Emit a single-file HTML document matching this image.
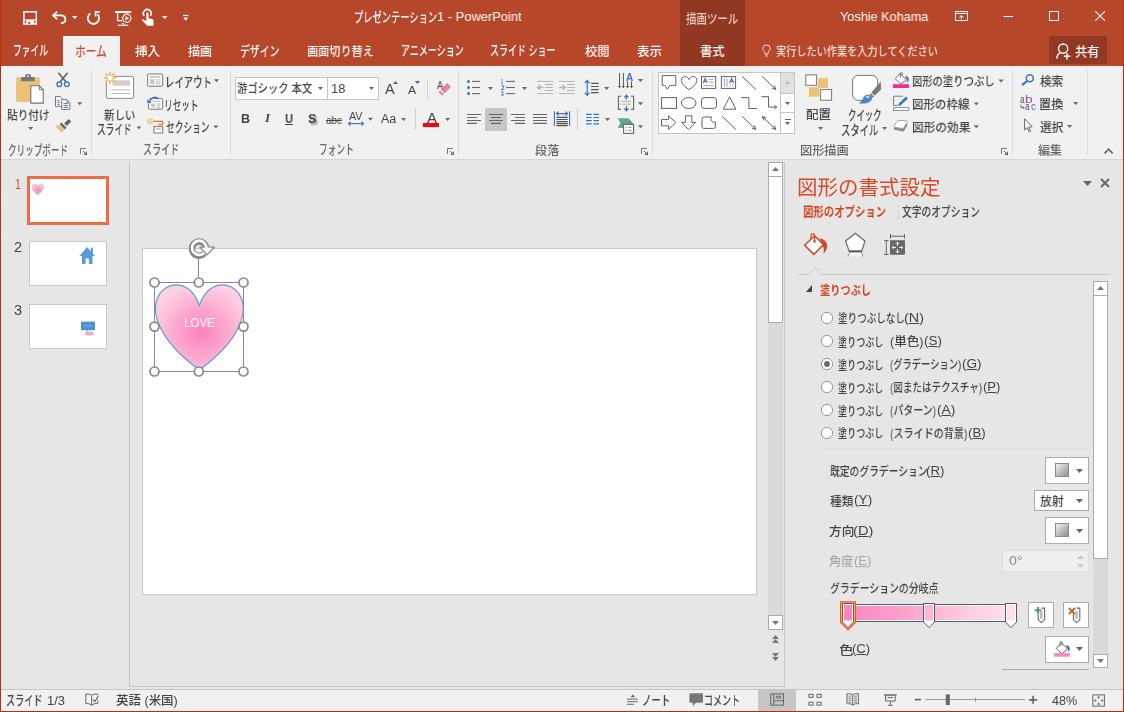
<!DOCTYPE html>
<html lang="ja"><head><meta charset="utf-8"><title>PowerPoint</title><style>
html,body{margin:0;padding:0;}
body{width:1124px;height:712px;position:relative;overflow:hidden;background:#E6E6E6;font-family:"Liberation Sans","Noto Sans CJK JP",sans-serif;color:#444;}
.a{position:absolute;}
.t{position:absolute;white-space:nowrap;line-height:20px;transform-origin:0 0;color:#444;font-weight:500;will-change:transform;}
svg{position:absolute;overflow:visible;}
u{text-decoration:underline;text-underline-offset:1px;}
</style></head>
<body>
<div class="a" style="left:0px;top:0px;width:1124px;height:66px;background:#B7472A;"></div>
<div class="a" style="left:680px;top:0px;width:65px;height:66px;background:#913823;"></div>
<div class="a" style="left:0px;top:66px;width:1124px;height:94px;background:#F1F1F1;border-bottom:1px solid #D4D4D4;box-sizing:border-box;"></div>
<div class="a" style="left:63px;top:36px;width:57px;height:31px;background:#F1F1F1;"></div>
<div class="a" style="left:1049px;top:36px;width:58px;height:28px;background:#923924;"></div>
<div class="a" style="left:91px;top:70px;width:1px;height:85px;background:#DADADA;"></div>
<div class="a" style="left:230px;top:70px;width:1px;height:85px;background:#DADADA;"></div>
<div class="a" style="left:458px;top:70px;width:1px;height:85px;background:#DADADA;"></div>
<div class="a" style="left:652px;top:70px;width:1px;height:85px;background:#DADADA;"></div>
<div class="a" style="left:1012px;top:70px;width:1px;height:85px;background:#DADADA;"></div>
<div class="a" style="left:1087px;top:70px;width:1px;height:85px;background:#DADADA;"></div>
<div class="a" style="left:427px;top:79px;width:1px;height:20px;background:#D0D0D0;"></div>
<div class="a" style="left:415px;top:108px;width:1px;height:22px;background:#D0D0D0;"></div>
<div class="a" style="left:577px;top:108px;width:1px;height:22px;background:#D0D0D0;"></div>
<div class="a" style="left:235px;top:77px;width:93px;height:23px;background:#fff;box-sizing:border-box;border:1px solid #C6C6C6;"></div>
<div class="a" style="left:327px;top:77px;width:52px;height:23px;background:#fff;box-sizing:border-box;border:1px solid #C6C6C6;"></div>
<svg style="left:318px;top:87px" width="5" height="3" viewBox="0 0 5 3"><path d="M0 0H5L2.5 3Z" fill="#666"/></svg>
<svg style="left:369px;top:87px" width="5" height="3" viewBox="0 0 5 3"><path d="M0 0H5L2.5 3Z" fill="#666"/></svg>
<div class="a" style="left:485px;top:108px;width:22px;height:23px;background:#C6C6C6;"></div>
<div class="a" style="left:658px;top:72px;width:137px;height:62px;background:#fff;box-sizing:border-box;border:1px solid #C6C6C6;"></div>
<div class="a" style="left:781px;top:73px;width:13px;height:20px;background:#E1E1E1;"></div>
<div class="a" style="left:781px;top:93px;width:13px;height:1px;background:#C6C6C6;"></div>
<div class="a" style="left:781px;top:112px;width:13px;height:1px;background:#C6C6C6;"></div>
<div class="a" style="left:780px;top:73px;width:1px;height:60px;background:#C6C6C6;"></div>
<svg style="left:785px;top:81px" width="5" height="3" viewBox="0 0 5 3"><path d="M0 3H5L2.5 0Z" fill="#B8B8B8"/></svg>
<svg style="left:785px;top:102px" width="5" height="3" viewBox="0 0 5 3"><path d="M0 0H5L2.5 3Z" fill="#666"/></svg>
<div class="a" style="left:784.5px;top:119px;width:6.0px;height:1px;background:#666;"></div>
<svg style="left:785px;top:122px" width="5" height="3" viewBox="0 0 5 3"><path d="M0 0H5L2.5 3Z" fill="#666"/></svg>
<div class="a" style="left:129px;top:162px;width:1px;height:524px;background:#C6C6C6;"></div>
<div class="a" style="left:129px;top:686px;width:656px;height:1px;background:#C6C6C6;"></div>
<div class="a" style="left:27px;top:176px;width:82px;height:49px;background:#fff;box-sizing:border-box;border:3px solid #ED6C47;"></div>
<div class="a" style="left:29px;top:241px;width:78px;height:45px;background:#fff;box-sizing:border-box;border:1px solid #C8C8C8;"></div>
<div class="a" style="left:29px;top:304px;width:78px;height:45px;background:#fff;box-sizing:border-box;border:1px solid #C8C8C8;"></div>
<div class="a" style="left:142px;top:248px;width:615px;height:347px;background:#fff;box-sizing:border-box;border:1px solid #C8C8C8;"></div>
<div class="a" style="left:768px;top:162px;width:15px;height:468px;background:#DADADA;"></div>
<div class="a" style="left:768px;top:162px;width:15px;height:15px;background:#fff;box-sizing:border-box;border:1px solid #ABABAB;"></div>
<div class="a" style="left:768px;top:176px;width:15px;height:147px;background:#fff;box-sizing:border-box;border:1px solid #ABABAB;"></div>
<div class="a" style="left:768px;top:615px;width:15px;height:15px;background:#fff;box-sizing:border-box;border:1px solid #ABABAB;"></div>
<svg style="left:772px;top:167px" width="7" height="4" viewBox="0 0 7 4"><path d="M0 4H7L3.5 0Z" fill="#777"/></svg>
<svg style="left:772px;top:621px" width="7" height="4" viewBox="0 0 7 4"><path d="M0 0H7L3.5 4Z" fill="#777"/></svg>
<svg style="left:772px;top:635px" width="7" height="8" viewBox="0 0 7 8"><path d="M0 4H7L3.5 0Z M0 8H7L3.5 4Z" fill="#777"/></svg>
<svg style="left:772px;top:653px" width="7" height="8" viewBox="0 0 7 8"><path d="M0 0H7L3.5 4Z M0 4H7L3.5 8Z" fill="#777"/></svg>
<div class="a" style="left:784px;top:162px;width:1px;height:525px;background:#C6C6C6;"></div>
<svg style="left:798px;top:267px" width="312" height="9" viewBox="0 0 312 9"><path d="M0 7.5H10.9L17 0.2L23.2 7.5H311.5" fill="none" stroke="#C8C8C8" stroke-width="1"/></svg>
<svg style="left:1083px;top:181px" width="9" height="5" viewBox="0 0 9 5"><path d="M0 0H9L4.5 5Z" fill="#666"/></svg>
<svg style="left:1100px;top:178px" width="10" height="10" viewBox="0 0 10 10"><path d="M1 1L9 9M9 1L1 9" stroke="#666" stroke-width="2" fill="none"/></svg>
<div class="a" style="left:898px;top:204px;width:1px;height:15px;background:#D8D8D8;"></div>
<div class="a" style="left:1093px;top:281px;width:15px;height:387px;background:#DADADA;"></div>
<div class="a" style="left:1093px;top:281px;width:15px;height:15px;background:#fff;box-sizing:border-box;border:1px solid #ABABAB;"></div>
<div class="a" style="left:1093px;top:295px;width:15px;height:264px;background:#fff;box-sizing:border-box;border:1px solid #ABABAB;"></div>
<div class="a" style="left:1093px;top:654px;width:15px;height:14px;background:#fff;box-sizing:border-box;border:1px solid #ABABAB;"></div>
<svg style="left:1097px;top:286px" width="7" height="4" viewBox="0 0 7 4"><path d="M0 4H7L3.5 0Z" fill="#777"/></svg>
<svg style="left:1097px;top:659px" width="7" height="4" viewBox="0 0 7 4"><path d="M0 0H7L3.5 4Z" fill="#777"/></svg>
<svg style="left:806.3px;top:284.6px" width="6" height="7" viewBox="0 0 6 7"><path d="M6 0V7H0Z" fill="#444"/></svg>
<svg style="left:820.1px;top:310.9px" width="14" height="14" viewBox="0 0 14 14"><circle cx="7" cy="7" r="5.6" fill="#fff" stroke="#9A9A9A" stroke-width="1"/></svg>
<svg style="left:820.1px;top:333.9px" width="14" height="14" viewBox="0 0 14 14"><circle cx="7" cy="7" r="5.6" fill="#fff" stroke="#9A9A9A" stroke-width="1"/></svg>
<svg style="left:820.1px;top:356.9px" width="14" height="14" viewBox="0 0 14 14"><circle cx="7" cy="7" r="5.6" fill="#fff" stroke="#9A9A9A" stroke-width="1"/><circle cx="7" cy="7" r="2.9" fill="#6A6A6A"/></svg>
<svg style="left:820.1px;top:379.9px" width="14" height="14" viewBox="0 0 14 14"><circle cx="7" cy="7" r="5.6" fill="#fff" stroke="#9A9A9A" stroke-width="1"/></svg>
<svg style="left:820.1px;top:402.9px" width="14" height="14" viewBox="0 0 14 14"><circle cx="7" cy="7" r="5.6" fill="#fff" stroke="#9A9A9A" stroke-width="1"/></svg>
<svg style="left:820.1px;top:425.9px" width="14" height="14" viewBox="0 0 14 14"><circle cx="7" cy="7" r="5.6" fill="#fff" stroke="#9A9A9A" stroke-width="1"/></svg>
<div class="a" style="left:820px;top:449px;width:269px;height:1px;background:#DEDEDE;"></div>
<div class="a" style="left:1045px;top:457px;width:44px;height:27px;background:#fff;box-sizing:border-box;border:1px solid #ABABAB;"></div>
<div class="a" style="left:1034px;top:490px;width:55px;height:21px;background:#fff;box-sizing:border-box;border:1px solid #ABABAB;"></div>
<div class="a" style="left:1045px;top:517px;width:44px;height:27px;background:#fff;box-sizing:border-box;border:1px solid #ABABAB;"></div>
<div class="a" style="left:1002px;top:550px;width:87px;height:22px;background:#EFEFEF;box-sizing:border-box;border:1px solid #E0E0E0;"></div>
<svg style="left:1054px;top:462px" width="16" height="16" viewBox="0 0 16 16"><defs><linearGradient id="g470" x1="0" y1="0" x2="1" y2="1"><stop offset="0" stop-color="#f4f4f4"/><stop offset="1" stop-color="#8c8c8c"/></linearGradient></defs><rect x="1.5" y="1.5" width="13" height="13" fill="url(#g470)" stroke="#8A8A8A"/></svg>
<svg style="left:1076.2px;top:469px" width="7" height="4" viewBox="0 0 7 4"><path d="M0 0H7L3.5 4Z" fill="#666"/></svg>
<svg style="left:1054px;top:522px" width="16" height="16" viewBox="0 0 16 16"><defs><linearGradient id="g530" x1="0" y1="0" x2="1" y2="1"><stop offset="0" stop-color="#f4f4f4"/><stop offset="1" stop-color="#8c8c8c"/></linearGradient></defs><rect x="1.5" y="1.5" width="13" height="13" fill="url(#g530)" stroke="#8A8A8A"/></svg>
<svg style="left:1076.2px;top:529px" width="7" height="4" viewBox="0 0 7 4"><path d="M0 0H7L3.5 4Z" fill="#666"/></svg>
<svg style="left:1076.2px;top:498.5px" width="7" height="4" viewBox="0 0 7 4"><path d="M0 0H7L3.5 4Z" fill="#666"/></svg>
<svg style="left:1077px;top:555px" width="7" height="4" viewBox="0 0 7 4"><path d="M0 4H7L3.5 0Z" fill="#C8C8C8"/></svg>
<svg style="left:1077px;top:563.8px" width="7" height="4" viewBox="0 0 7 4"><path d="M0 0H7L3.5 4Z" fill="#C8C8C8"/></svg>
<div class="a" style="left:842px;top:604px;width:175px;height:18px;background:#fff;box-sizing:border-box;border:1px solid #5A5A5A;"></div>
<div class="a" style="left:844px;top:606px;width:171px;height:14px;background:linear-gradient(90deg,#FB86BC 0%,#FC9CC8 30%,#FDB4D3 50%,#FECFE2 75%,#FEE3EE 100%);"></div>
<svg style="left:839px;top:599px" width="18" height="34" viewBox="0 0 18 34"><path d="M1.6 2.9H16.4V23.4L9 30.6L1.6 23.4Z" fill="#FFD966" stroke="#F0501E" stroke-width="1.2"/><path d="M3.5 4.5H14.5V23L9 28.6L3.5 23Z" fill="#fff" stroke="#5A5A5A" stroke-width="1"/><rect x="5" y="6" width="8" height="15.5" fill="#FB86BC"/></svg>
<svg style="left:920px;top:599px" width="18" height="34" viewBox="0 0 18 34"><path d="M3.5 4.5H14.5V23L9 28.6L3.5 23Z" fill="#fff" stroke="#5A5A5A" stroke-width="1"/><rect x="5" y="6" width="8" height="15.5" fill="#FDB6D5"/></svg>
<svg style="left:1002px;top:599px" width="18" height="34" viewBox="0 0 18 34"><path d="M3.5 4.5H14.5V23L9 28.6L3.5 23Z" fill="#fff" stroke="#5A5A5A" stroke-width="1"/><rect x="5" y="6" width="8" height="15.5" fill="#FEE0EC"/></svg>
<div class="a" style="left:1028px;top:602px;width:26px;height:26px;background:#fff;box-sizing:border-box;border:1px solid #ABABAB;"></div>
<div class="a" style="left:1063px;top:602px;width:26px;height:26px;background:#fff;box-sizing:border-box;border:1px solid #ABABAB;"></div>
<div class="a" style="left:1045px;top:636px;width:44px;height:27px;background:#fff;box-sizing:border-box;border:1px solid #ABABAB;"></div>
<svg style="left:1076.2px;top:647.2px" width="7" height="4" viewBox="0 0 7 4"><path d="M0 0H7L3.5 4Z" fill="#666"/></svg>
<div class="a" style="left:1002px;top:669px;width:87px;height:1px;background:#ABABAB;"></div>
<div class="a" style="left:0px;top:689px;width:1124px;height:23px;background:#F1F1F1;border-top:1px solid #C6C6C6;box-sizing:border-box;"></div>
<div class="a" style="left:758px;top:690px;width:38px;height:21px;background:#C6C6C6;"></div>
<svg style="left:0;top:0" width="1124" height="712" viewBox="0 0 1124 712">
<rect x="23.9" y="11.8" width="12.4" height="12.2" fill="none" stroke="#fff" stroke-width="1.5" />
<path d="M24 19.9H36" fill="none" stroke="#fff" stroke-width="1.1" />
<path d="M26.2 20.2H34.2V24H26.2Z" fill="#fff" />
<rect x="28.3" y="21.8" width="1.9" height="2.2" fill="#B7472A" />
<path d="M57.2 11.6L53 15.4L57.2 19.2" fill="none" stroke="#fff" stroke-width="1.8" stroke-linejoin="miter"/>
<path d="M53.5 15.4H60.6C63.4 15.4 65.4 17 65.4 19.4C65.4 21.8 63.4 23 60.8 23.1" fill="none" stroke="#fff" stroke-width="1.8" />
<path d="M72 16h5.4l-2.7 3Z" fill="#fff" />
<path d="M90.3 13.6A5.6 5.6 0 1 0 97.6 14.4" fill="none" stroke="#fff" stroke-width="1.8" />
<path d="M95.6 16.6V11.9H99.8" fill="none" stroke="#fff" stroke-width="1.7" />
<rect x="115" y="11.1" width="16.2" height="1.9" fill="#fff" />
<path d="M117.6 13V20.6H122" fill="none" stroke="#fff" stroke-width="1.3" />
<circle cx="126.8" cy="18.2" r="4.1" fill="none" stroke="#fff" stroke-width="1.2"/>
<path d="M125.5 16L129 18.2L125.5 20.4Z" fill="#fff" />
<path d="M122.3 22.8L124 24.8" fill="none" stroke="#fff" stroke-width="1.1" />
<path d="M117.9 25.3H128.3" fill="none" stroke="#fff" stroke-width="1.2" />
<path d="M144.2 15.8A3.9 3.9 0 1 1 150.4 15.8" fill="none" stroke="#fff" stroke-width="1.6" />
<path d="M146.3 13.6a1.1 1.1 0 0 1 2.2 0V18.2l3.6 0.9c1 0.3 1.4 0.9 1.4 1.9V25.8H147.2L142.2 20.6c-0.5-0.6 0.3-1.6 1.2-1.1L146.3 21.2Z" fill="#fff" />
<path d="M162 16h5.4l-2.7 3Z" fill="#fff" />
<rect x="183.1" y="14.9" width="5.2" height="1.1" fill="#fff" />
<path d="M183.1 17.6h5.2l-2.6 3.2Z" fill="#fff" />
<rect x="955.5" y="11.5" width="12" height="9" fill="none" stroke="#fff" stroke-width="1" />
<path d="M955.5 13.5H967.5" fill="none" stroke="#fff" stroke-width="1" />
<path d="M961.4 19.3V15.6M959.4 17.4L961.4 15.4L963.4 17.4" fill="none" stroke="#fff" stroke-width="1" />
<path d="M1003.5 16.5H1013" fill="none" stroke="#fff" stroke-width="1" />
<rect x="1049.5" y="11.5" width="9" height="9" fill="none" stroke="#fff" stroke-width="1" />
<path d="M1095.3 11.2L1105 20.9M1105 11.2L1095.3 20.9" fill="none" stroke="#fff" stroke-width="1.1" />
<path d="M765 54.2V52.3C763.6 51.3 762.8 50 762.8 48.6A3.7 3.7 0 0 1 770.2 48.6C770.2 50 769.4 51.3 768 52.3V54.2Z" fill="none" stroke="#F6DDD5" stroke-width="1" />
<path d="M765.2 56H767.8" fill="none" stroke="#F6DDD5" stroke-width="1" />
<circle cx="1063.1" cy="48.6" r="4.6" fill="none" stroke="#fff" stroke-width="1.4"/>
<path d="M1056.8 58.6C1057 55.4 1058.6 53.4 1060.6 52.6" fill="none" stroke="#fff" stroke-width="1.4" />
<path d="M1067 53V59.4M1063.8 56.2H1070.2" fill="none" stroke="#fff" stroke-width="1.4" />
<rect x="16.1" y="77.2" width="23.8" height="24.8" fill="#EBC378" rx="1.6"/>
<path d="M21.1 81.2V78.2Q21.1 77 22.3 77H25.3V75.6Q25.3 74.1 26.8 74.1H29.4Q30.9 74.1 30.9 75.6V77H33.6Q34.8 77 34.8 78.2V81.2Z" fill="#777" />
<rect x="27.2" y="75.3" width="1.8" height="1.4" fill="#F1F1F1" />
<path d="M30.8 85.8H39.3L43.3 89.8V103.1H30.8Z" fill="#fff" stroke="#777" stroke-width="1.1" />
<path d="M39.3 85.8V89.8H43.3" fill="none" stroke="#777" stroke-width="1" />
<path d="M28 127.1h5.2l-2.6 3Z" fill="#6A6A6A" />
<path d="M58.4 72.8L66.2 82.2M67.6 72.8L59.8 82.2" fill="none" stroke="#666" stroke-width="1.7" />
<circle cx="59.3" cy="84.2" r="2.4" fill="none" stroke="#3A74B8" stroke-width="1.3"/>
<circle cx="66.8" cy="84.2" r="2.4" fill="none" stroke="#3A74B8" stroke-width="1.3"/>
<path d="M55.5 96.6H60.3L62.8 99.1V106.4H55.5Z" fill="#fff" stroke="#777" stroke-width="1" />
<path d="M57.2 100.5H59.8M57.2 102.5H59.8M57.2 104.4H59.8" fill="none" stroke="#3A74B8" stroke-width="0.9" />
<path d="M61.7 99.6H66.8L69.8 102.6V109.4H61.7Z" fill="#fff" stroke="#777" stroke-width="1" />
<path d="M66.8 99.6V102.6H69.8" fill="none" stroke="#777" stroke-width="0.8" />
<path d="M63.4 103.6H68M63.4 105.5H68M63.4 107.4H68" fill="none" stroke="#3A74B8" stroke-width="0.9" />
<path d="M77.3 102.2h5l-2.5 3Z" fill="#6A6A6A" />
<path d="M68.6 119L71.3 121.6L66.8 126L64.2 123.2Z" fill="#666" />
<path d="M61.2 122.2L66.6 127.8L64.4 129.4L59.8 124.2Z" fill="#666" />
<path d="M59.4 124.6L64 129.8L61.6 132.8L55.2 126.2Z" fill="#EBC378" />
<rect x="106.4" y="76.4" width="27.2" height="22" fill="#fff" stroke="#8A8A8A" stroke-width="1" rx="1.6"/>
<rect x="112.5" y="80.3" width="17.5" height="5.4" fill="#CFCFCF" />
<path d="M112 89.9H130M112 93.4H130" fill="none" stroke="#B8B8B8" stroke-width="1" />
<path d="M109.6 89.9H110.8M109.6 93.4H110.8" fill="none" stroke="#B8B8B8" stroke-width="1" />
<circle cx="110" cy="77.8" r="4.4" fill="#F1F1F1"/>
<path d="M112.52 77.80L116.30 77.80M111.78 79.58L114.45 82.25M110.00 80.32L110.00 84.10M108.22 79.58L105.55 82.25M107.48 77.80L103.70 77.80M108.22 76.02L105.55 73.35M110.00 75.28L110.00 71.50M111.78 76.02L114.45 73.35" fill="none" stroke="#EBC06D" stroke-width="1.9" />
<circle cx="110" cy="77.8" r="2.1" fill="#fff"/>
<path d="M136.6 126.6h4.6l-2.3 2.9Z" fill="#6A6A6A" />
<rect x="147.7" y="74" width="15" height="12.2" fill="#fff" stroke="#777" stroke-width="1" rx="0.8"/>
<rect x="150" y="76" width="10.4" height="1.8" fill="#C8C8C8" />
<rect x="150" y="79.2" width="4.6" height="5" fill="#C8C8C8" />
<path d="M156 79.8H160.6M156 81.8H160.6M156 83.8H160.6" fill="none" stroke="#B0B0B0" stroke-width="0.9" />
<path d="M214 79.2h5l-2.5 3Z" fill="#6A6A6A" />
<rect x="148.5" y="98.6" width="14.2" height="10.6" fill="#fff" stroke="#777" stroke-width="1" rx="0.8"/>
<rect x="151" y="100.6" width="9.6" height="1.6" fill="#C8C8C8" />
<rect x="151" y="103.4" width="4.2" height="4" fill="#C8C8C8" />
<path d="M156.6 104H160.6M156.6 105.8H160.6M156.6 107.6H160.6" fill="none" stroke="#B0B0B0" stroke-width="0.9" />
<path d="M147.2 97.2V102.6H152.4" fill="none" stroke="#F1F1F1" stroke-width="3" />
<path d="M149.6 101.8C150.4 98.8 153.2 97 156 97.6C157 97.8 157.8 98.4 158.2 99" fill="none" stroke="#3A74B8" stroke-width="1.5" />
<path d="M147 99.6L147.6 103.4L151.6 102.6Z" fill="#3A74B8" />
<path d="M151.32 121.40L153.70 121.40M151.02 122.12L152.70 123.80M150.30 122.42L150.30 124.80M149.58 122.12L147.90 123.80M149.28 121.40L146.90 121.40M149.58 120.68L147.90 119.00M150.30 120.38L150.30 118.00M151.02 120.68L152.70 119.00" fill="none" stroke="#EBC06D" stroke-width="1.2" />
<path d="M153.6 121.4H162.6V124.6H158" fill="none" stroke="#E8772E" stroke-width="1.3" />
<rect x="153.9" y="126.6" width="8.8" height="6.4" fill="#fff" stroke="#777" stroke-width="1" />
<rect x="155.6" y="128.2" width="5.4" height="1.6" fill="#C8C8C8" />
<path d="M213.4 125.4h5l-2.5 3Z" fill="#6A6A6A" />
<path d="M80.5 153.9V148.5H85.9" fill="none" stroke="#777" stroke-width="1" /><path d="M87.0 151.2V154.9H83.3Z" fill="#666" /><path d="M83.0 151.0L85.7 153.7" fill="none" stroke="#666" stroke-width="1" />
<path d="M447.5 153.9V148.5H452.9" fill="none" stroke="#777" stroke-width="1" /><path d="M454.0 151.2V154.9H450.3Z" fill="#666" /><path d="M450.0 151.0L452.7 153.7" fill="none" stroke="#666" stroke-width="1" />
<path d="M641.5 153.9V148.5H646.9" fill="none" stroke="#777" stroke-width="1" /><path d="M648.0 151.2V154.9H644.3Z" fill="#666" /><path d="M644.0 151.0L646.7 153.7" fill="none" stroke="#666" stroke-width="1" />
<path d="M1001.5 153.9V148.5H1006.9" fill="none" stroke="#777" stroke-width="1" /><path d="M1008.0 151.2V154.9H1004.3Z" fill="#666" /><path d="M1004.0 151.0L1006.7 153.7" fill="none" stroke="#666" stroke-width="1" />
<path d="M392.9 84h5.2l-2.6 -3Z" fill="#3A74B8" />
<path d="M414.8 81h5.4l-2.7 3Z" fill="#3A74B8" />
<path d="M447.2 83L451 86.8L444.6 93.4L440.8 89.6Z" fill="#E8849A" />
<path d="M440 90.4L443.8 94.2L442.2 95.8L438.4 92Z" fill="#E8849A" />
<path d="M349 123.6H363" fill="none" stroke="#3A74B8" stroke-width="1.1" />
<path d="M350.6 121.6L348.4 123.6L350.6 125.6M361.4 121.6L363.6 123.6L361.4 125.6" fill="none" stroke="#3A74B8" stroke-width="1.1" />
<path d="M367.9 117.8h5l-2.5 3Z" fill="#6A6A6A" />
<path d="M401.1 118h5l-2.5 3Z" fill="#6A6A6A" />
<rect x="423" y="123" width="16" height="4" fill="#FF0000" />
<path d="M445 118h5.2l-2.6 3Z" fill="#6A6A6A" />
<circle cx="468.5" cy="81.4" r="1.5" fill="#3A74B8"/>
<path d="M472 81.4H480" fill="none" stroke="#666" stroke-width="1.1" />
<path d="M506.1 81.4H515" fill="none" stroke="#666" stroke-width="1.1" />
<circle cx="468.5" cy="87.5" r="1.5" fill="#3A74B8"/>
<path d="M472 87.5H480" fill="none" stroke="#666" stroke-width="1.1" />
<path d="M506.1 87.5H515" fill="none" stroke="#666" stroke-width="1.1" />
<circle cx="468.5" cy="93.6" r="1.5" fill="#3A74B8"/>
<path d="M472 93.6H480" fill="none" stroke="#666" stroke-width="1.1" />
<path d="M506.1 93.6H515" fill="none" stroke="#666" stroke-width="1.1" />
<path d="M487.9 87h5.2l-2.6 3Z" fill="#6A6A6A" />
<path d="M521.9 87h5.2l-2.6 3Z" fill="#6A6A6A" />
<path d="M537 81.4H553M537 93.6H553M545 84.5H553M545 87.5H553M545 90.5H553" fill="none" stroke="#B4B4B4" stroke-width="1" />
<path d="M543.5 87.5H538M540.4 85L537.6 87.5L540.4 90" fill="none" stroke="#B4B4B4" stroke-width="1.4" />
<path d="M559 81.4H575M559 93.6H575M567.2 84.5H575M567.2 87.5H575M567.2 90.5H575" fill="none" stroke="#B4B4B4" stroke-width="1" />
<path d="M559.2 87.5H564.8M562.6 85L565.4 87.5L562.6 90" fill="none" stroke="#B4B4B4" stroke-width="1.4" />
<path d="M587.2 80.6V95.2M584.8 83.2L587.2 80.4L589.6 83.2M584.8 92.6L587.2 95.4L589.6 92.6" fill="none" stroke="#3A74B8" stroke-width="1.2" />
<path d="M591.1 83.4H598.7M591.1 86.5H598.7M591.1 89.6H598.7M591.1 92.6H598.7" fill="none" stroke="#555" stroke-width="1.1" />
<path d="M604 87h5.2l-2.6 3Z" fill="#6A6A6A" />
<path d="M619.5 73V87.4M623.4 73V87.4M627.6 81.5V87.4M631.5 81.5V87.4" fill="none" stroke="#555" stroke-width="1" />
<path d="M617.9 86L619.5 88.2L621.1 86Z" fill="#555" />
<path d="M621.8 86L623.4 88.2L625.0 86Z" fill="#555" />
<path d="M626.0 86L627.6 88.2L629.2 86Z" fill="#555" />
<path d="M629.9 86L631.5 88.2L633.1 86Z" fill="#555" />
<path d="M637.9 79h5.2l-2.6 3Z" fill="#6A6A6A" />
<path d="M621 96.2H618.4V109.4H621M631 96.2H633.6V109.4H631" fill="none" stroke="#666" stroke-width="1.1" />
<path d="M622 101.3H631M622 104.2H631" fill="none" stroke="#B0B0B0" stroke-width="1" />
<path d="M620.4 101.3H621.2M620.4 104.2H621.2" fill="none" stroke="#888" stroke-width="1" />
<path d="M626.4 95.4V99.6M624.2 97.6L626.4 95.2L628.6 97.6M626.4 106V110.4M624.2 108.4L626.4 110.8L628.6 108.4" fill="none" stroke="#3A74B8" stroke-width="1.2" />
<path d="M637.9 102.3h5.2l-2.6 3Z" fill="#6A6A6A" />
<path d="M617.8 118.2H628.4L633 123V124H623V128H617.8L620.4 123Z" fill="#5FA88C" />
<rect x="623.6" y="124.4" width="10" height="9" fill="#fff" stroke="#666" stroke-width="1.1" />
<path d="M626 127.4H627M628.4 127.4H631.4M626 130.4H627M628.4 130.4H631.4" fill="none" stroke="#888" stroke-width="1" />
<path d="M637.9 125.2h5.2l-2.6 3Z" fill="#6A6A6A" />
<path d="M467 114.5H481M467 117.5H476.9M467 120.5H481M467 123.4H476.9" fill="none" stroke="#666" stroke-width="1.1" />
<path d="M489 114.5H502.9M491 117.5H500.9M489 120.5H502.9M491 123.4H500.9" fill="none" stroke="#666" stroke-width="1.1" />
<path d="M511 114.5H525M515 117.5H525M511 120.5H525M515 123.4H525" fill="none" stroke="#666" stroke-width="1.1" />
<path d="M533 114.5H547M533 117.5H547M533 120.5H547M533 123.4H547" fill="none" stroke="#666" stroke-width="1.1" />
<path d="M554.4 111.2V126M569.6 111.2V126" fill="none" stroke="#3A74B8" stroke-width="1.1" />
<path d="M556.6 113.6H567.4M558.6 111.6L556.4 113.6L558.6 115.6M565.4 111.6L567.6 113.6L565.4 115.6" fill="none" stroke="#3A74B8" stroke-width="1.2" />
<path d="M556.4 117.4H567.8M556.4 119.5H567.8M556.4 121.6H567.8M556.4 123.6H567.8M556.4 125.6H567.8" fill="none" stroke="#555" stroke-width="1.1" />
<path d="M586.1 114.3H591.7M593.5 114.3H599M586.1 117.5H591.7M593.5 117.5H599M586.1 120.6H591.7M593.5 120.6H599M586.1 123.8H591.7M593.5 123.8H599" fill="none" stroke="#3A74B8" stroke-width="1.2" />
<path d="M604.9 118h5.2l-2.6 3Z" fill="#6A6A6A" />
<path d="M662.2 75.6H675.8V85.4H670L667.4 89.2L664.8 85.4H662.2Z" fill="#fff" stroke="#626262" stroke-width="1" />
<path d="M689.1 79.7C692.3083333333334 72.0 704.8208333333333 79.7 689.1 89.60000000000001C673.3791666666667 79.7 685.8916666666667 72.0 689.1 79.7Z" fill="#fff" stroke="#626262" stroke-width="1" />
<rect x="701.5" y="76.6" width="14.2" height="11.8" fill="#fff" stroke="#626262" stroke-width="1" />
<path d="M703.2 83L705.2 78.4L707.2 83M703.9 81.4H706.5" fill="none" stroke="#3A74B8" stroke-width="1.1" />
<path d="M708.8 79.4H713.6M708.8 82H713.6M703.4 85.6H713.6" fill="none" stroke="#999" stroke-width="0.9" />
<rect x="721.4" y="76.6" width="14.2" height="11.8" fill="#fff" stroke="#626262" stroke-width="1" />
<path d="M729.6 83L731.6 78.4L733.6 83M730.3 81.4H732.9" fill="none" stroke="#3A74B8" stroke-width="1.1" />
<path d="M724.4 78.4V86.8M727 78.4V86.8" fill="none" stroke="#999" stroke-width="0.9" />
<path d="M730.4 84.4V86.8M732.8 84.4V86.8" fill="none" stroke="#999" stroke-width="0.9" stroke-dasharray="1 0.8"/>
<path d="M742.2 76.4L756 89.6" fill="none" stroke="#626262" stroke-width="1" />
<path d="M762.2 76.4L775.8 89.4" fill="none" stroke="#626262" stroke-width="1" />
<path d="M771.78 88.19L775.8 89.4L774.41 85.44" fill="none" stroke="#626262" stroke-width="1" />
<rect x="661.5" y="97.6" width="15" height="10.8" fill="#fff" stroke="#626262" stroke-width="1" />
<ellipse cx="688.7" cy="103" rx="7.3" ry="5.5" fill="#fff" stroke="#626262" stroke-width="1"/>
<rect x="701.5" y="97.6" width="15" height="10.8" fill="#fff" stroke="#626262" stroke-width="1" rx="2.6"/>
<path d="M729.6 96.8L735.8 109.2H723.4Z" fill="#fff" stroke="#626262" stroke-width="1" />
<path d="M741.2 97.6H748.9V108.5H756.9" fill="none" stroke="#626262" stroke-width="1" />
<path d="M761.4 96.7H768.5V107.1H776.6" fill="none" stroke="#626262" stroke-width="1" />
<path d="M774.34 108.82L776.8 107.1L774.34 105.38" fill="none" stroke="#626262" stroke-width="1" />
<path d="M661.5 119.4H668.6V115.8L675.8 122.6L668.6 129.4V125.8H661.5Z" fill="#fff" stroke="#626262" stroke-width="1" />
<path d="M685.4 115.8H691.8V122.4H695.6L688.6 129.6L681.6 122.4H685.4Z" fill="#fff" stroke="#626262" stroke-width="1" />
<path d="M704.4 117H711.4C709.8 120 711.6 122.6 715.4 122V126.6Q715.4 128.4 713.6 128.4H703.8Q702 128.4 702 126.6V119.4Q702 117 704.4 117Z" fill="#fff" stroke="#626262" stroke-width="1" />
<path d="M722.2 116.4L736 129.6" fill="none" stroke="#626262" stroke-width="1" />
<path d="M742.2 116.4L755.8 129.4" fill="none" stroke="#626262" stroke-width="1" />
<path d="M751.78 128.19L755.8 129.4L754.41 125.44" fill="none" stroke="#626262" stroke-width="1" />
<path d="M762.4 116.6L775.8 129.4" fill="none" stroke="#626262" stroke-width="1" />
<path d="M771.78 128.19L775.8 129.4L774.41 125.44" fill="none" stroke="#626262" stroke-width="1" />
<path d="M766.42 117.81L762.4 116.6L763.79 120.56" fill="none" stroke="#626262" stroke-width="1" />
<rect x="818" y="78.1" width="9.9" height="9.8" fill="#EBC378" />
<rect x="809" y="87.2" width="10.4" height="9.6" fill="#EBC378" />
<rect x="805.8" y="74.9" width="10.8" height="10.4" fill="#fff" stroke="#777" stroke-width="1" />
<rect x="820.6" y="89.6" width="11" height="10.6" fill="#fff" stroke="#777" stroke-width="1" />
<path d="M818 127.1h5.2l-2.6 3Z" fill="#6A6A6A" />
<rect x="852.6" y="75.4" width="25" height="25" fill="#fff" stroke="#777" stroke-width="1" rx="5.5"/>
<path d="M866 104L880 90V100Z" fill="#F1F1F1" />
<path d="M880.8 81.6L881 89.4L874.6 95.8L871.4 92.6Z" fill="#777" />
<path d="M870.8 93.2L874 96.4L872.6 97.8L869.4 94.6Z" fill="#777" />
<path d="M869 95C866.6 94.4 864.6 95.6 863.4 97.6C862.2 99.8 861.4 101.8 858.8 103.4C863.6 103.8 868.6 103.6 871 100.8C872.4 99 872.2 97 872 96.8Z" fill="#4A86C6" />
<path d="M866.2 96.6C867.6 95.8 869.4 96.4 869.8 97.6C868.6 97.4 867.4 97.4 866.2 98Z" fill="#fff" />
<path d="M882.1 127.1h5l-2.5 3Z" fill="#6A6A6A" />
<path d="M900.2 73.6L906.6 80L900.6 84L895.2 78.6Z" fill="#fff" stroke="#666" stroke-width="1" />
<path d="M900.4 78V73.4Q900.4 72.4 901.4 72.4Q902.4 72.4 902.4 73.4V75" fill="none" stroke="#666" stroke-width="0.9" />
<path d="M905.6 75.8C908 76.4 909.4 78.4 908.6 80.8L907 83C907.6 80.6 907.2 78.6 905.6 77.4Z" fill="#3A74B8" />
<rect x="893" y="84.2" width="16" height="3.8" fill="#F72B8C" />
<path d="M903 96.2H893.6V105.4H897.6" fill="none" stroke="#777" stroke-width="1" />
<path d="M906 96.4L908 98.4L900.6 105.2L898 106L898.8 103.4Z" fill="#3A74B8" />
<rect x="893.5" y="107.6" width="15.2" height="2.8" fill="#fff" stroke="#888" stroke-width="0.9" />
<path d="M897.6 122.8L894 128Q893.2 129.4 894.8 129.8L902.4 131.4Q903.6 131.6 904.4 130.4L907.2 125.6L907.2 123.4Z" fill="#8A8A8A" />
<path d="M899.2 120.6H905.8Q907.8 120.6 907 122.4L904.2 127.2Q903.4 128.6 901.6 128.4L895 127.4Q893.4 127 894.2 125.6L896.8 121.8Q897.6 120.6 899.2 120.6Z" fill="#fff" stroke="#999" stroke-width="0.9" />
<path d="M998.4 79.4h5.2l-2.6 3Z" fill="#6A6A6A" />
<path d="M973.7 102.4h5.2l-2.6 3Z" fill="#6A6A6A" />
<path d="M973.7 125.3h5.2l-2.6 3Z" fill="#6A6A6A" />
<circle cx="1029.8" cy="78.3" r="3.5" fill="none" stroke="#3A74B8" stroke-width="1.5"/>
<path d="M1027.2 81L1022 85.2" fill="none" stroke="#3A74B8" stroke-width="2.2" />
<path d="M1020.8 104.6V107.6H1024M1022.6 106L1024.2 107.6L1022.6 109.2" fill="none" stroke="#3A74B8" stroke-width="0.9" />
<path d="M1073.1 102h5.2l-2.6 3Z" fill="#6A6A6A" />
<path d="M1024.6 118.8V130L1027.2 127.6L1029 131.8L1030.6 131.2L1028.8 127L1032.2 126.8Z" fill="#fff" stroke="#555" stroke-width="0.9" />
<path d="M1067 125h5.2l-2.6 3Z" fill="#6A6A6A" />
<path d="M1104.6 153.4L1108.6 149.2L1112.6 153.4" fill="none" stroke="#666" stroke-width="1.7" />
<defs><radialGradient id="hg" cx="0.52" cy="0.56" r="0.58"><stop offset="0" stop-color="#FB82BA"/><stop offset="0.5" stop-color="#FCA8CD"/><stop offset="1" stop-color="#FFD1E3"/></radialGradient></defs>
<path d="M37.90 186.60C40.28 180.07 49.54 186.60 37.90 195.00C26.26 186.60 35.53 180.07 37.90 186.60Z" fill="url(#hg)" stroke="#9DB7E0" stroke-width="0.6" />
<path d="M79.4 256L87.2 247.1L90.8 251.2V247.8H92.9V253.6L95 256Z" fill="#5B9BD5" />
<path d="M82 255.4H92.5V264H88.9V258.6H85.6V264H82Z" fill="#5B9BD5" />
<rect x="81" y="321.6" width="14" height="8.6" fill="#4F8FD3" />
<path d="M84 325.6H92" fill="none" stroke="#9CC2EA" stroke-width="0.8" stroke-dasharray="1.2 0.6"/>
<path d="M86 330.2H88.4L87.2 331.8Z" fill="#4F8FD3" />
<ellipse cx="89.4" cy="333.5" rx="4.6" ry="2" fill="#F4A6CC"/>
<path d="M199.35 305.35C217.45 255.07 288.06 305.35 199.35 370.00C110.64 305.35 181.25 255.07 199.35 305.35Z" fill="url(#hg)" stroke="#6395D8" stroke-width="1.15" />
<rect x="154.5" y="282.5" width="89" height="89" fill="none" stroke="#8A8A8A" stroke-width="1" />
<circle cx="154.5" cy="282.5" r="4.5" fill="#fff" stroke="#888" stroke-width="1.7"/>
<circle cx="154.5" cy="326.6" r="4.5" fill="#fff" stroke="#888" stroke-width="1.7"/>
<circle cx="154.5" cy="371.5" r="4.5" fill="#fff" stroke="#888" stroke-width="1.7"/>
<circle cx="198.8" cy="282.5" r="4.5" fill="#fff" stroke="#888" stroke-width="1.7"/>
<circle cx="198.8" cy="371.5" r="4.5" fill="#fff" stroke="#888" stroke-width="1.7"/>
<circle cx="243.5" cy="282.5" r="4.5" fill="#fff" stroke="#888" stroke-width="1.7"/>
<circle cx="243.5" cy="326.6" r="4.5" fill="#fff" stroke="#888" stroke-width="1.7"/>
<circle cx="243.5" cy="371.5" r="4.5" fill="#fff" stroke="#888" stroke-width="1.7"/>
<path d="M198.5 259V278" fill="none" stroke="#8A8A8A" stroke-width="1" />
<path d="M204.2 253.6A7.1 7.1 0 1 1 206.2 248.6" fill="none" stroke="#858585" stroke-width="6.4" />
<path d="M200 247.2H214.2L207.1 254.9Z" fill="#fff" stroke="#8A8A8A" stroke-width="1.3" stroke-linejoin="round"/>
<path d="M203.8 253.2A7.1 7.1 0 1 1 206.2 248.6" fill="none" stroke="#fff" stroke-width="2.7" />
<path d="M204.6 248.4H210.4" fill="none" stroke="#fff" stroke-width="1.4" />
<path d="M819.8 238.2C824 239 827.6 242 827.2 246.4C827 249 825.4 251.6 823.4 253.8C824.4 250.4 823.8 247.4 822.4 245.8Z" fill="#D24726" />
<path d="M814.6 235.8L823.6 244.6L813.8 254.4L804.6 245.2Z" fill="#fff" stroke="#D24726" stroke-width="1.5" />
<path d="M811 239V235.6A1.8 1.8 0 0 1 814.6 235.6V241" fill="none" stroke="#D24726" stroke-width="1.3" />
<circle cx="814.5" cy="241.5" r="1.3" fill="#D24726"/>
<defs><linearGradient id="rf" x1="0" y1="0" x2="0" y2="1"><stop offset="0" stop-color="#fff"/><stop offset="1" stop-color="#fff" stop-opacity="0"/></linearGradient></defs>
<path d="M849.6 252.6H861.4L863.2 257H847.8Z" fill="url(#rf)" />
<path d="M849.6 252.6L847.8 256.6M861.4 252.6L863.2 256.6" fill="none" stroke="#999" stroke-width="1" />
<path d="M855.3 233.2L865 241L861.6 251.4H849.2L845.6 241Z" fill="#fff" stroke="#666" stroke-width="1.2" />
<path d="M849.2 251.4H861.6" fill="none" stroke="#555" stroke-width="2" />
<rect x="890" y="240.2" width="15" height="14.6" fill="#666" rx="0.8"/>
<path d="M890.5 236.2H904.5M890.5 234V238.6M904.5 234V238.6" fill="none" stroke="#666" stroke-width="1" />
<path d="M886.3 240.6V254.4M884 240.6H888.6M884 254.4H888.6" fill="none" stroke="#666" stroke-width="1" />
<path d="M897.5 242.4V252.6M892.4 247.5H902.6" fill="none" stroke="#fff" stroke-width="0.9" stroke-dasharray="3.6 3"/>
<path d="M896 243.8L897.5 242L899 243.8M896 251.2L897.5 253L899 251.2M893.8 246L892 247.5L893.8 249M901.2 246L903 247.5L901.2 249" fill="none" stroke="#fff" stroke-width="0.9" />
<path d="M1041.4 608.1H1044.6000000000001V619.6L1041.4 622.6L1038.2 619.6V612.4" fill="none" stroke="#666" stroke-width="1.1" /><rect x="1040.2" y="611.2" width="2.3" height="7.6" fill="#B4B4B4" />
<path d="M1038 607V613.4M1034.8 610.2H1041.2" fill="none" stroke="#4A9B7A" stroke-width="2" />
<path d="M1076.6000000000001 608.1H1079.8000000000002V619.6L1076.6000000000001 622.6L1073.4 619.6V612.4" fill="none" stroke="#666" stroke-width="1.1" /><rect x="1075.4" y="611.2" width="2.3" height="7.6" fill="#B4B4B4" />
<path d="M1068.8 608L1075 614.2M1075 608L1068.8 614.2" fill="none" stroke="#D8532E" stroke-width="1.8" />
<path d="M1061.3 643L1067.6 648.8L1062 653.6L1056.2 648.6Z" fill="#fff" stroke="#666" stroke-width="1" />
<path d="M1060 646.4V642.6Q1060 641.5 1061.1 641.5Q1062.2 641.5 1062.2 642.6V645.4" fill="none" stroke="#666" stroke-width="0.9" />
<path d="M1066.2 645C1069 645.4 1070.4 647.6 1069.6 650L1067.8 652.4C1068.4 650 1068 648.2 1066.6 646.8Z" fill="#3A74B8" />
<rect x="1054.1" y="653.1" width="15.7" height="3.6" fill="#FB86BC" />
<path d="M91.6 695.2V705.6M91.6 695.2C90 694.1 87.6 693.9 85.8 694.1V703.5C87.8 703.3 90 703.7 91.6 705.4C93.2 703.7 95.6 703.3 97.8 703.5V700.4" fill="none" stroke="#666" stroke-width="1" />
<path d="M91.6 695.2C93.2 694.1 95.4 693.9 97.8 694.1V695.4" fill="none" stroke="#666" stroke-width="1" />
<path d="M93 699.4L94.8 701.6L98.4 696.2" fill="none" stroke="#666" stroke-width="1.2" />
<path d="M630.7 697.1999999999999h4.4l-2.2 -2.8Z" fill="#666" />
<path d="M627.1 699.1H637.8M627.1 701.7H637.8M627.1 704.3H634" fill="none" stroke="#666" stroke-width="1" />
<path d="M690.6 693.2H701.8Q703 693.2 703 694.4V701.6Q703 702.8 701.8 702.8H696L692.8 706.2V702.8H690.6Q689.4 702.8 689.4 701.6V694.4Q689.4 693.2 690.6 693.2Z" fill="#777" />
<rect x="770.7" y="693.9" width="12.8" height="11.2" fill="none" stroke="#666" stroke-width="1" />
<path d="M773.8 694V705M773.8 700.8H783.4" fill="none" stroke="#666" stroke-width="1" />
<rect x="776.8" y="696.3" width="3.6" height="1.8" fill="none" stroke="#666" stroke-width="0.9" />
<rect x="808.9" y="694.3" width="4.2" height="3" fill="none" stroke="#666" stroke-width="1" />
<rect x="808.9" y="702.2" width="4.2" height="3" fill="none" stroke="#666" stroke-width="1" />
<rect x="817" y="694.3" width="4.2" height="3" fill="none" stroke="#666" stroke-width="1" />
<rect x="817" y="702.2" width="4.2" height="3" fill="none" stroke="#666" stroke-width="1" />
<path d="M852.7 694.8V705.6M852.7 694.8C851 693.6 848.8 693.6 847 693.8V703.8C849 703.6 851 703.8 852.7 705C854.4 703.8 856.4 703.6 858.4 703.8V693.8C856.6 693.6 854.4 693.6 852.7 694.8" fill="none" stroke="#666" stroke-width="1" />
<path d="M848.4 696.2H851.4M848.4 698.2H851.4M848.4 700.2H851.4M848.4 702.2H851.4M854 696.2H857M854 698.2H857M854 700.2H857M854 702.2H857" fill="none" stroke="#666" stroke-width="0.8" />
<path d="M884.1 695H896.6" fill="none" stroke="#666" stroke-width="1.5" />
<path d="M885.6 695.6V701H895.2V695.6M887.6 697.6H893.2M890.4 701V705.2M887.8 705.3H893" fill="none" stroke="#666" stroke-width="1" />
<path d="M914.9 699.6H920.9" fill="none" stroke="#666" stroke-width="1.7" />
<path d="M925.5 699.5H1025" fill="none" stroke="#9A9A9A" stroke-width="1" />
<path d="M975.5 697.4V702" fill="none" stroke="#9A9A9A" stroke-width="1" />
<rect x="945.8" y="694.4" width="4" height="10.6" fill="#666" />
<path d="M1029.1 699.8H1037.1M1033.1 695.8V703.8" fill="none" stroke="#666" stroke-width="1.7" />
<rect x="1092.8" y="694.9" width="11.6" height="11.2" fill="none" stroke="#666" stroke-width="1" />
<path d="M1098.6 696.4V698.8M1098.6 702.4V704.8M1094.2 700.5H1096.6M1100.6 700.5H1103" fill="none" stroke="#666" stroke-width="0.9" />
<path d="M1097.4 697.6L1098.6 696.2L1099.8 697.6M1097.4 703.6L1098.6 705L1099.8 703.6M1095.4 699.3L1094 700.5L1095.4 701.7M1101.8 699.3L1103.2 700.5L1101.8 701.7" fill="none" stroke="#666" stroke-width="0.8" />
</svg>
<div class="a" style="left:0px;top:0px;width:1124px;height:712px;box-sizing:border-box;border:1px solid #B5300F;border-top:none;"></div>
<span class="t" style="left:353.74px;top:7.90px;font-size:13.6px;color:#fff;transform:scaleX(0.6807);">プレゼンテーション</span>
<span class="t" style="left:436.81px;top:7.30px;font-size:13px;font-weight:400;color:#fff;transform:scaleX(0.9917);">1 - PowerPoint</span>
<span class="t" style="left:686.30px;top:8.50px;font-size:12.6px;color:#EBCBC0;transform:scaleX(0.8286);">描画ツール</span>
<span class="t" style="left:840.01px;top:6.90px;font-size:12.8px;font-weight:400;color:#fff;transform:scaleX(0.9909);">Yoshie Kohama</span>
<span class="t" style="left:12.71px;top:40.50px;font-size:13.6px;color:#fff;transform:scaleX(0.6442);">ファイル</span>
<span class="t" style="left:75.21px;top:41.50px;font-size:13.6px;color:#C9492B;transform:scaleX(0.7895);">ホーム</span>
<span class="t" style="left:135.00px;top:41.50px;font-size:12.5px;color:#fff;">挿入</span>
<span class="t" style="left:188.00px;top:41.50px;font-size:12.5px;color:#fff;transform:scaleX(0.9600);">描画</span>
<span class="t" style="left:239.77px;top:41.50px;font-size:13.6px;color:#fff;transform:scaleX(0.7264);">デザイン</span>
<span class="t" style="left:307.11px;top:41.50px;font-size:12.5px;color:#fff;transform:scaleX(0.8904);">画面切り替え</span>
<span class="t" style="left:400.67px;top:40.50px;font-size:13.6px;color:#fff;transform:scaleX(0.6630);">アニメーション</span>
<span class="t" style="left:490.18px;top:40.50px;font-size:13.6px;color:#fff;transform:scaleX(0.6615);">スライド ショー</span>
<span class="t" style="left:585.00px;top:41.50px;font-size:12.5px;color:#fff;transform:scaleX(0.9792);">校閲</span>
<span class="t" style="left:637.00px;top:41.50px;font-size:12.5px;color:#fff;">表示</span>
<span class="t" style="left:699.52px;top:41.50px;font-size:12.5px;color:#fff;transform:scaleX(0.9792);">書式</span>
<span class="t" style="left:776.19px;top:41.50px;font-size:12.5px;color:#F6DDD5;transform:scaleX(0.8122);">実行したい作業を入力してください</span>
<span class="t" style="left:1075.00px;top:41.50px;font-size:12.8px;color:#fff;transform:scaleX(0.9520);">共有</span>
<span class="t" style="left:6.62px;top:105.50px;font-size:12.2px;transform:scaleX(0.8766);">貼り付け</span>
<span class="t" style="left:8.06px;top:141.30px;font-size:13.4px;color:#666;transform:scaleX(0.6407);">クリップボード</span>
<span class="t" style="left:104.00px;top:105.50px;font-size:12.2px;transform:scaleX(0.8611);">新しい</span>
<span class="t" style="left:96.93px;top:120.00px;font-size:13.6px;transform:scaleX(0.6373);">スライド</span>
<span class="t" style="left:142.65px;top:140.30px;font-size:13.4px;color:#666;transform:scaleX(0.6740);">スライド</span>
<span class="t" style="left:164.50px;top:72.90px;font-size:13.4px;transform:scaleX(0.7000);">レイアウト</span>
<span class="t" style="left:164.47px;top:95.50px;font-size:13.4px;transform:scaleX(0.6429);">リセット</span>
<span class="t" style="left:165.95px;top:118.20px;font-size:13.4px;transform:scaleX(0.6508);">セクション</span>
<span class="t" style="left:237.35px;top:79.40px;font-size:12.2px;transform:scaleX(0.8483);">游ゴシック 本文</span>
<span class="t" style="left:330.73px;top:78.90px;font-size:12.2px;transform:scaleX(1.0667);">18</span>
<span class="t" style="left:319.20px;top:139.90px;font-size:13.4px;color:#666;transform:scaleX(0.6500);">フォント</span>
<span class="t" style="left:240.66px;top:108.80px;font-size:12px;font-weight:700;transform:scaleX(1.0429);">B</span>
<span class="t" style="left:264.50px;top:108.30px;font-size:12px;font-weight:700;font-style:italic;font-family:'Liberation Serif',serif;transform:scaleX(1.1000);">I</span>
<span class="t" style="left:285.40px;top:108.80px;font-size:12px;font-weight:700;transform:scaleX(0.9333);"><u>U</u></span>
<span class="t" style="left:308.00px;top:109.30px;font-size:13px;font-weight:700;text-shadow:1.5px 1.5px 1.5px #999;">S</span>
<span class="t" style="left:325.80px;top:109.50px;font-size:11px;transform:scaleX(0.9000);"><s>abc</s></span>
<span class="t" style="left:348.80px;top:106.00px;font-size:10.5px;transform:scaleX(1.0231);">AV</span>
<span class="t" style="left:381.20px;top:108.90px;font-size:12.5px;transform:scaleX(0.9800);">Aa</span>
<span class="t" style="left:426.70px;top:108.00px;font-size:14px;transform:scaleX(1.0667);">A</span>
<span class="t" style="left:385.40px;top:78.80px;font-size:14px;transform:scaleX(1.0333);">A</span>
<span class="t" style="left:408.10px;top:80.00px;font-size:11px;transform:scaleX(1.1143);">A</span>
<span class="t" style="left:534.90px;top:141.10px;font-size:12.2px;color:#666;">段落</span>
<span class="t" style="left:806.37px;top:105.30px;font-size:12.2px;transform:scaleX(1.0261);">配置</span>
<span class="t" style="left:848.37px;top:105.60px;font-size:13.4px;transform:scaleX(0.6255);">クイック</span>
<span class="t" style="left:840.91px;top:120.90px;font-size:13.4px;transform:scaleX(0.6961);">スタイル</span>
<span class="t" style="left:799.50px;top:141.10px;font-size:12.2px;color:#666;">図形描画</span>
<span class="t" style="left:911.95px;top:72.40px;font-size:12.2px;transform:scaleX(0.8458);">図形の塗りつぶし</span>
<span class="t" style="left:911.86px;top:95.40px;font-size:12.2px;transform:scaleX(0.9433);">図形の枠線</span>
<span class="t" style="left:911.84px;top:118.30px;font-size:12.2px;transform:scaleX(0.9593);">図形の効果</span>
<span class="t" style="left:1039.90px;top:72.40px;font-size:12.2px;transform:scaleX(0.9500);">検索</span>
<span class="t" style="left:1038.91px;top:95.40px;font-size:12.2px;transform:scaleX(0.9913);">置換</span>
<span class="t" style="left:1039.90px;top:118.30px;font-size:12.2px;transform:scaleX(0.9500);">選択</span>
<span class="t" style="left:1038.20px;top:141.10px;font-size:12.2px;color:#666;transform:scaleX(0.9750);">編集</span>
<span class="t" style="left:14.79px;top:174.30px;font-size:14.5px;color:#D24726;transform:scaleX(0.7143);">1</span>
<span class="t" style="left:13.50px;top:237.20px;font-size:14.5px;">2</span>
<span class="t" style="left:13.50px;top:300.20px;font-size:14.5px;">3</span>
<span class="t" style="left:183.56px;top:313.00px;font-size:12.3px;font-weight:400;color:#fff;transform:scaleX(0.9387);">LOVE</span>
<span class="t" style="left:797.30px;top:178.40px;font-size:20.5px;font-weight:400;color:#D84A27;">図形の書式設定</span>
<span class="t" style="left:802.60px;top:201.80px;font-size:13px;font-weight:700;color:#D0451F;transform:scaleX(0.8000);">図形のオプション</span>
<span class="t" style="left:902.45px;top:201.80px;font-size:13px;transform:scaleX(0.7490);">文字のオプション</span>
<span class="t" style="left:819.70px;top:280.70px;font-size:12.5px;font-weight:700;color:#D0451F;transform:scaleX(0.8113);">塗りつぶし</span>
<span class="t" style="left:838.30px;top:308.90px;font-size:12.5px;transform:scaleX(0.7621);">塗りつぶしなし</span>
<span class="t" style="left:904.49px;top:307.50px;font-size:13px;font-weight:400;transform:scaleX(1.1062);">(<u>N</u>)</span>
<span class="t" style="left:838.30px;top:332.60px;font-size:12.5px;transform:scaleX(0.7226);">塗りつぶし</span>
<span class="t" style="left:890.21px;top:331.90px;font-size:12.5px;transform:scaleX(0.9875);">(単色)</span>
<span class="t" style="left:923.76px;top:331.20px;font-size:13px;font-weight:400;transform:scaleX(1.0375);">(<u>S</u>)</span>
<span class="t" style="left:838.30px;top:355.60px;font-size:12.5px;transform:scaleX(0.7226);">塗りつぶし</span>
<span class="t" style="left:890.46px;top:354.90px;font-size:12.5px;transform:scaleX(0.7436);">(グラデーション)</span>
<span class="t" style="left:961.56px;top:354.20px;font-size:13px;font-weight:400;transform:scaleX(1.0412);">(<u>G</u>)</span>
<span class="t" style="left:838.30px;top:378.60px;font-size:12.5px;transform:scaleX(0.7226);">塗りつぶし</span>
<span class="t" style="left:890.44px;top:377.90px;font-size:12.5px;transform:scaleX(0.7647);">(図またはテクスチャ)</span>
<span class="t" style="left:983.02px;top:377.20px;font-size:13px;font-weight:400;transform:scaleX(0.9750);">(<u>P</u>)</span>
<span class="t" style="left:838.30px;top:401.50px;font-size:12.5px;transform:scaleX(0.7226);">塗りつぶし</span>
<span class="t" style="left:890.40px;top:400.80px;font-size:12.5px;transform:scaleX(0.7964);">(パターン)</span>
<span class="t" style="left:936.64px;top:400.10px;font-size:13px;font-weight:400;transform:scaleX(1.0625);">(<u>A</u>)</span>
<span class="t" style="left:838.30px;top:424.30px;font-size:12.5px;transform:scaleX(0.7226);">塗りつぶし</span>
<span class="t" style="left:890.39px;top:423.60px;font-size:12.5px;transform:scaleX(0.8053);">(スライドの背景)</span>
<span class="t" style="left:967.68px;top:422.90px;font-size:13px;font-weight:400;transform:scaleX(1.0187);">(<u>B</u>)</span>
<span class="t" style="left:829.52px;top:461.90px;font-size:12.5px;transform:scaleX(0.7821);">既定のグラデーション</span>
<span class="t" style="left:926.38px;top:460.50px;font-size:13px;font-weight:400;transform:scaleX(1.0188);">(<u>R</u>)</span>
<span class="t" style="left:830.30px;top:491.80px;font-size:12.5px;transform:scaleX(0.9320);">種類</span>
<span class="t" style="left:853.55px;top:490.40px;font-size:13px;font-weight:400;transform:scaleX(1.0500);">(<u>Y</u>)</span>
<span class="t" style="left:829.29px;top:521.90px;font-size:12.5px;transform:scaleX(1.0130);">方向</span>
<span class="t" style="left:853.47px;top:520.50px;font-size:13px;font-weight:400;transform:scaleX(1.1313);">(<u>D</u>)</span>
<span class="t" style="left:829.33px;top:552.30px;font-size:12.5px;color:#A6A6A6;transform:scaleX(0.9708);">角度</span>
<span class="t" style="left:853.61px;top:550.90px;font-size:13px;font-weight:400;color:#A6A6A6;transform:scaleX(0.9875);">(<u>E</u>)</span>
<span class="t" style="left:829.51px;top:578.50px;font-size:12.5px;transform:scaleX(0.7897);">グラデーションの分岐点</span>
<span class="t" style="left:838.95px;top:640.60px;font-size:12.5px;transform:scaleX(1.1545);">色</span>
<span class="t" style="left:852.49px;top:639.20px;font-size:13px;font-weight:400;transform:scaleX(1.0063);">(<u>C</u>)</span>
<span class="t" style="left:1040.30px;top:491.60px;font-size:12.5px;transform:scaleX(0.9480);">放射</span>
<span class="t" style="left:1009.30px;top:551.30px;font-size:12.5px;font-weight:400;color:#8E8E8E;transform:scaleX(1.1364);">0°</span>
<span class="t" style="left:6.46px;top:691.30px;font-size:13.6px;transform:scaleX(0.6706);">スライド</span>
<span class="t" style="left:46.66px;top:691.30px;font-size:12.5px;transform:scaleX(1.0375);">1/3</span>
<span class="t" style="left:115.67px;top:690.80px;font-size:12.2px;transform:scaleX(1.0254);">英語 (米国)</span>
<span class="t" style="left:642.12px;top:691.30px;font-size:13.6px;transform:scaleX(0.6919);">ノート</span>
<span class="t" style="left:704.48px;top:691.30px;font-size:13.6px;transform:scaleX(0.6620);">コメント</span>
<span class="t" style="left:1052.20px;top:691.30px;font-size:12.2px;transform:scaleX(1.0333);">48%</span>
<span class="t" style="left:437.00px;top:74.80px;font-size:10.5px;transform:scaleX(0.8714);">A</span>
<span class="t" style="left:501.40px;top:71.90px;font-size:6.5px;font-weight:700;color:#3A74B8;transform:scaleX(0.5500);">1</span>
<span class="t" style="left:500.90px;top:78.00px;font-size:6.5px;font-weight:700;color:#3A74B8;transform:scaleX(1.0333);">2</span>
<span class="t" style="left:500.90px;top:84.10px;font-size:6.5px;font-weight:700;color:#3A74B8;transform:scaleX(0.7750);">3</span>
<span class="t" style="left:626.20px;top:67.50px;font-size:10px;font-weight:700;color:#3A74B8;transform:scaleX(0.9857);">A</span>
<span class="t" style="left:1020.10px;top:89.80px;font-size:10px;transform:scaleX(0.8167);">a</span>
<span class="t" style="left:1024.62px;top:89.80px;font-size:10px;color:#9B4F96;transform:scaleX(1.3750);">b</span>
<span class="t" style="left:1025.00px;top:97.40px;font-size:10px;transform:scaleX(0.8333);">a</span>
<span class="t" style="left:1031.00px;top:97.40px;font-size:10px;color:#3A74B8;transform:scaleX(0.9800);">c</span>
</body></html>
